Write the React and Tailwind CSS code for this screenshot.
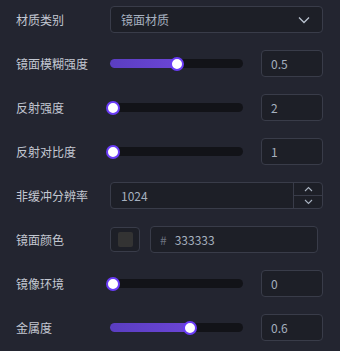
import React from "react";

const font = { fontFamily: '"Noto Sans CJK SC", "Noto Sans", sans-serif' };

function Label({ children }) {
  return <div className="w-[94px] shrink-0 text-[12px] text-[#c3c8d2]">{children}</div>;
}

function Slider({ value, display }) {
  const center = Math.max(3, value * 133);
  return (
    <div className="flex items-center h-[27px]">
      <div className="relative w-[133px] h-[9px] rounded-full bg-[#121318]">
        <div
          className="absolute left-0 top-0 h-full rounded-full bg-gradient-to-r from-[#5a3ec0] to-[#6b45d6]"
          style={{ width: value > 0 ? center : 0 }}
        />
        <div
          className="absolute top-1/2 -translate-y-1/2 w-[14px] h-[14px] rounded-full bg-white border-[2px] border-[#6a3cf7]"
          style={{ left: center - 7 }}
        />
      </div>
      <div className="ml-[18px] w-[62px] h-[27px] rounded-[4px] border border-[#393c49] bg-[#1d1f27] flex items-center px-[9px] text-[12px] text-[#a6b0bf]">
        {display ?? value}
      </div>
    </div>
  );
}

function Row({ label, children }) {
  return (
    <div className="flex items-center h-[27px]">
      <Label>{label}</Label>
      <div className="flex-1">{children}</div>
    </div>
  );
}

export default function App() {
  return (
    <div className="w-[340px] h-[351px] bg-[#232530] pl-4 pr-[17px] pt-[6px] flex flex-col gap-[17px]" style={font}>
      <Row label="材质类别">
        <div className="h-[27px] rounded-[4px] border border-[#393c49] bg-[#1d1f27] flex items-center justify-between pl-[10px] pr-[12px] text-[12px] text-[#a6b0bf]">
          <span>镜面材质</span>
          <svg width="12" height="8" viewBox="0 0 12 8" fill="none">
            <path d="M1 1.5L6 6.5L11 1.5" stroke="#b9c2cf" strokeWidth="1.3" />
          </svg>
        </div>
      </Row>
      <Row label="镜面模糊强度">
        <Slider value={0.5} />
      </Row>
      <Row label="反射强度">
        <Slider value={0} display="2" />
      </Row>
      <Row label="反射对比度">
        <Slider value={0} display="1" />
      </Row>
      <Row label="非缓冲分辨率">
        <div className="h-[27px] rounded-[4px] border border-[#393c49] bg-[#1d1f27] flex items-stretch text-[12px] text-[#a6b0bf]">
          <div className="flex-1 flex items-center pl-[10px]">1024</div>
          <div className="w-[29px] border-l border-[#393c49] flex flex-col">
            <div className="flex-1 flex items-center justify-center border-b border-[#393c49]">
              <svg width="9" height="6" viewBox="0 0 9 6" fill="none">
                <path d="M1 5L4.5 1.5L8 5" stroke="#a9b3c1" strokeWidth="1.1" />
              </svg>
            </div>
            <div className="flex-1 flex items-center justify-center">
              <svg width="9" height="6" viewBox="0 0 9 6" fill="none">
                <path d="M1 1L4.5 4.5L8 1" stroke="#a9b3c1" strokeWidth="1.1" />
              </svg>
            </div>
          </div>
        </div>
      </Row>
      <Row label="镜面颜色">
        <div className="flex items-center gap-[10px]">
          <div className="w-[30px] h-[25px] rounded-[4px] border border-[#393c49] bg-[#1d1f27] flex items-center justify-center">
            <div className="w-[15px] h-[15px] rounded-[2px] bg-[#333333]" />
          </div>
          <div className="w-[168px] h-[27px] rounded-[4px] border border-[#393c49] bg-[#1d1f27] flex items-center pl-[9px] text-[12px] text-[#a6b0bf]">
            <span className="text-[#6d7380] mr-[8px]">#</span>
            <span>333333</span>
          </div>
        </div>
      </Row>
      <Row label="镜像环境">
        <Slider value={0} />
      </Row>
      <Row label="金属度">
        <Slider value={0.6} />
      </Row>
    </div>
  );
}
